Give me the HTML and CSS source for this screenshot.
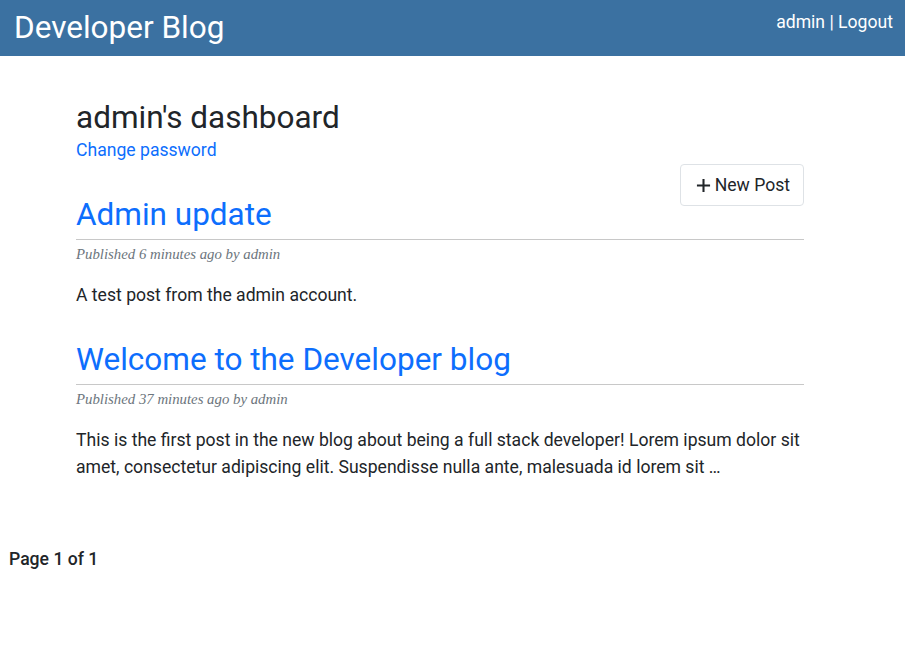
FILE: index.html
```html
<!DOCTYPE html>
<html lang="en">
<head>
<meta charset="utf-8">
<title>Developer Blog</title>
<link rel="stylesheet" href="styles.css">
</head>
<body>
<header class="topbar">
  <a class="brand" href="#">Developer Blog</a>
  <div class="userbox"><a href="#">admin</a> | <a href="#">Logout</a></div>
</header>
<main class="container">
  <h1 class="dash-title">admin's dashboard</h1>
  <div class="sub"><a href="#">Change password</a></div>
  <a class="btn-new" href="#"><svg class="plus" viewBox="0 0 16 16" width="15" height="15"><path d="M8 1v14M1 8h14" stroke="currentColor" stroke-width="2.2" fill="none"/></svg>New Post</a>
  <article class="post">
    <h2 class="post-title"><a href="#">Admin update</a></h2>
    <div class="meta">Published 6 minutes ago by admin</div>
    <p class="body">A test post from the admin account.</p>
  </article>
  <article class="post">
    <h2 class="post-title"><a href="#">Welcome to the Developer blog</a></h2>
    <div class="meta">Published 37 minutes ago by admin</div>
    <p class="body">This is the first post in the new blog about being a full stack developer! Lorem ipsum dolor sit amet, consectetur adipiscing elit. Suspendisse nulla ante, malesuada id lorem sit …</p>
  </article>
</main>
<nav class="pager">Page 1 of 1</nav>
</body>
</html>
```

FILE: styles.css
```css
html, body {
  margin: 0;
  padding: 0;
}
body {
  font-family: Roboto, "Liberation Sans", sans-serif;
  font-size: 17.6px;
  line-height: 1.5;
  color: #212529;
  background: #fff;
}
a {
  color: #0d6efd;
  text-decoration: none;
}
.topbar {
  height: 56px;
  background: #3b71a1;
  display: flex;
  justify-content: space-between;
  align-items: flex-start;
  padding: 0 12px 0 14px;
  box-sizing: border-box;
}
.brand {
  color: #fff;
  font-size: 31.5px;
  line-height: 1.2;
  margin-top: 9px;
}
.userbox {
  color: #fff;
  font-size: 17.6px;
  line-height: 26.4px;
  margin-top: 9px;
}
.userbox a {
  color: #fff;
}
.container {
  width: 728px;
  margin: 0 0 0 76px;
  padding-top: 43px;
}
.dash-title {
  font-size: 31.5px;
  font-weight: 400;
  line-height: 1.2;
  margin: 0;
}
.sub {
  margin: 0;
}
.btn-new {
  float: right;
  display: flex;
  align-items: center;
  gap: 4px;
  color: #212529;
  border: 1px solid #dee2e6;
  border-radius: 4px;
  padding: 7px 13px 7px 15px;
  line-height: 26px;
  margin-top: 1px;
}
.plus {
  display: block;
}
.post-title {
  font-size: 31.5px;
  font-weight: 400;
  line-height: 1.2;
  margin: 0;
  padding-top: 33px;
  padding-bottom: 5px;
  border-bottom: 1px solid #c8c8c8;
}
.meta {
  font-family: "Liberation Serif", "DejaVu Serif", serif;
  font-style: italic;
  font-size: 14.8px;
  color: #6c757d;
  line-height: 18px;
  margin-top: 5px;
}
.body {
  margin: 19px 0 0;
}
.pager {
  margin: 66px 0 0 9px;
  font-weight: 500;
  font-size: 17.6px;
}
```
